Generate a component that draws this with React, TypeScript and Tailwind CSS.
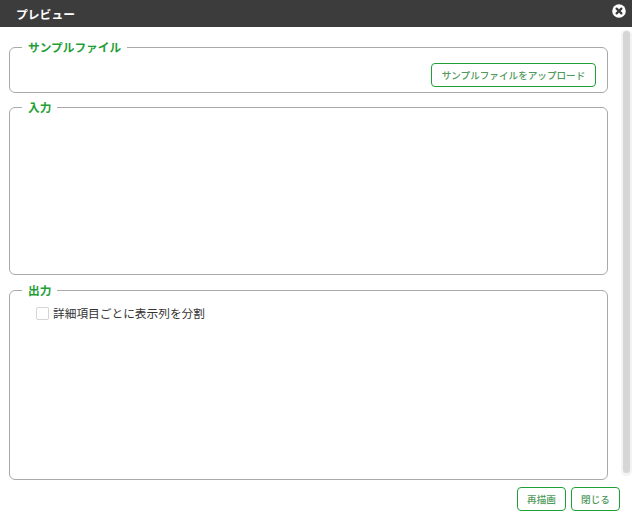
import React, { FC, ReactNode } from "react";

const font = "font-['Noto_Sans_CJK_JP','Noto_Sans',sans-serif]";

interface SectionProps {
  title: string;
  className?: string;
  children?: ReactNode;
}

const Section: FC<SectionProps> = ({ title, className = "", children }) => (
  <fieldset
    className={`border border-[#a9a9a9] rounded-[6px] pl-[12px] pr-[10px] ${className}`}
  >
    <legend className="pl-[6px] pr-[6px] text-[11.7px] leading-[16px] font-bold text-[#1fa037]">
      {title}
    </legend>
    {children}
  </fieldset>
);

const GreenButton: FC<{ className?: string; children: ReactNode }> = ({
  className = "",
  children,
}) => (
  <button
    className={`h-[24px] border border-[#1fa037] rounded-[4px] bg-white text-[9.6px] font-medium text-[#4f9a5c] flex items-center justify-center ${className}`}
  >
    {children}
  </button>
);

export default function App() {
  return (
    <div className={`relative w-[632px] h-[516px] bg-white overflow-hidden ${font}`}>
      <div className="h-[27px] bg-[#3c3c3c] flex items-center pl-[16px] text-[11.8px] font-bold text-white">
        プレビュー
      </div>
      <svg
        className="absolute right-[6px] top-[4px]"
        width="14"
        height="14"
        viewBox="0 0 14 14"
      >
        <circle cx="7" cy="7" r="6.8" fill="#fff" />
        <path
          d="M4.6 4.6 9.4 9.4M9.4 4.6 4.6 9.4"
          stroke="#3c3c3c"
          strokeWidth="2.2"
          strokeLinecap="round"
        />
      </svg>

      <div className="flex h-[489px]">
        <div className="w-[621px] pl-[9px] pr-[13px] pt-[12px]">
          <Section title="サンプルファイル" className="h-[54px]">
            <div className="flex justify-end">
              <GreenButton className="w-[165px] mt-[8px] mr-[1px]">
                サンプルファイルをアップロード
              </GreenButton>
            </div>
          </Section>
          <Section title="入力" className="h-[176px] mt-[6px]" />
          <Section title="出力" className="h-[198px] mt-[7px]">
            <label className="flex items-center ml-[14px] mt-[7px] text-[11.7px] leading-[16px] text-[#333333]">
              <span className="w-[13px] h-[13px] border border-[#d5d5d5] rounded-[2px] bg-white mr-[4px]" />
              詳細項目ごとに表示列を分割
            </label>
          </Section>
          <div className="flex justify-end gap-[5px] mt-[7px] mr-[-12px]">
            <GreenButton className="w-[49px]">再描画</GreenButton>
            <GreenButton className="w-[49px]">閉じる</GreenButton>
          </div>
        </div>
        <div className="w-[11px] h-[446px] mt-[3px] bg-[#f3f3f3] rounded-[5px] flex justify-center">
          <div className="w-[7px] h-[442px] mt-[1px] bg-[#d6d6d6] rounded-[4px]" />
        </div>
      </div>
    </div>
  );
}
